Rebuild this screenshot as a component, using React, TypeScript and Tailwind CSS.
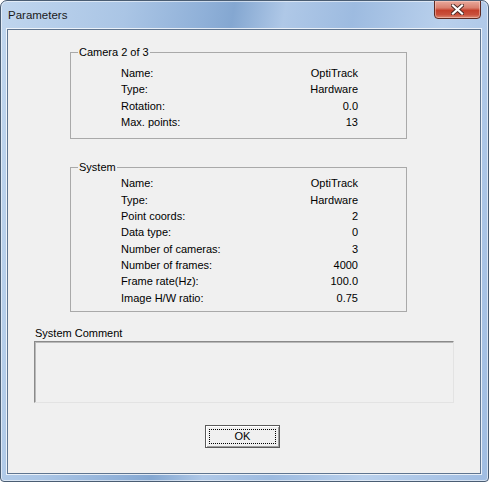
const camera: [string, string][] = [
  ['Name:', 'OptiTrack'],
  ['Type:', 'Hardware'],
  ['Rotation:', '0.0'],
  ['Max. points:', '13'],
];

const system: [string, string][] = [
  ['Name:', 'OptiTrack'],
  ['Type:', 'Hardware'],
  ['Point coords:', '2'],
  ['Data type:', '0'],
  ['Number of cameras:', '3'],
  ['Number of frames:', '4000'],
  ['Frame rate(Hz):', '100.0'],
  ['Image H/W ratio:', '0.75'],
];

function Rows({ rows }: { rows: [string, string][] }) {
  return (
    <div className="flex flex-col pl-[50px] pr-[48px]">
      {rows.map(([label, value]) => (
        <div key={label} className="flex justify-between h-[16.33px] leading-[16.33px]">
          <span>{label}</span>
          <span>{value}</span>
        </div>
      ))}
    </div>
  );
}

function GroupBox({ title, className, children }: { title: string; className: string; children: React.ReactNode }) {
  return (
    <fieldset className={`ml-[62px] w-[337px] border border-[#a9a9a9] min-w-0 ${className}`}>
      <legend className="ml-[7px] px-[1px] leading-[13px]">{title}</legend>
      {children}
    </fieldset>
  );
}

export default function App() {
  return (
    <div className="w-[489px] h-[482px] flex flex-col rounded-t-[7px] rounded-b-[4px] border border-[#4a5d73] bg-[linear-gradient(100deg,#c0d6ee_0%,#aac5e5_22%,#8fb0d8_36%,#84a7d1_41%,#afc8e7_50%,#9dbbe0_62%,#b9d0ec_78%,#a0bde2_100%)] shadow-[inset_0_0_0_1px_rgba(255,255,255,0.55)] font-['Liberation_Sans',Arial,sans-serif] text-[11px] text-black overflow-hidden">
      {/* Title bar */}
      <div className="h-[28px] flex justify-between shrink-0">
        <span className="self-center pl-[7px] pt-[1px] text-[11.5px] text-[#1a1a1a]">Parameters</span>
        <div className="mr-[7px] w-[47px] h-[19px] -mt-[1px] flex items-center justify-center rounded-b-[4px] border border-[#5e2a22] bg-[linear-gradient(180deg,#e9a99c_0%,#d9806f_40%,#c4402c_55%,#c9503c_80%,#dc8a74_100%)] shadow-[inset_0_0_0_1px_rgba(255,220,210,0.45)]">
          <svg width="13" height="11" viewBox="0 0 13 11">
            <path d="M2 1.5 L11 9.5 M11 1.5 L2 9.5" stroke="#4a2a26" strokeWidth="4" strokeLinecap="square" />
            <path d="M2 1.5 L11 9.5 M11 1.5 L2 9.5" stroke="#ffffff" strokeWidth="2.2" strokeLinecap="square" />
          </svg>
        </div>
      </div>

      {/* Client area */}
      <div className="ml-[6px] mr-[7px] mb-[7px] h-[445px] flex flex-col border border-[#5f7590] bg-[#f0f0f0] shadow-[0_0_0_1px_rgba(255,255,255,0.75)]">
        <GroupBox title="Camera 2 of 3" className="mt-[16px] pt-[6px] pb-[8px]">
          <Rows rows={camera} />
        </GroupBox>

        <GroupBox title="System" className="mt-[22px] pt-[1px] pb-[5px]">
          <Rows rows={system} />
        </GroupBox>

        <div className="ml-[27px] mt-[15px] leading-[13px]">System Comment</div>
        <div className="ml-[26px] mt-[1px] w-[420px] h-[62px] border border-t-[#8a8a8a] border-l-[#8a8a8a] border-b-[#e3e3e3] border-r-[#e3e3e3] shadow-[inset_1px_1px_0_#b9b9b9] bg-[#f0f0f0]" />

        <div className="ml-[197px] mt-[22px] w-[75px] h-[23px] flex p-[3px] border border-[#5a5a5a] bg-[#f0f0f0] shadow-[inset_1px_1px_0_#ffffff,inset_-1px_-1px_0_#a0a0a0]">
          <div className="flex-1 flex items-center justify-center border border-dotted border-black leading-none">
            OK
          </div>
        </div>
      </div>
    </div>
  );
}
